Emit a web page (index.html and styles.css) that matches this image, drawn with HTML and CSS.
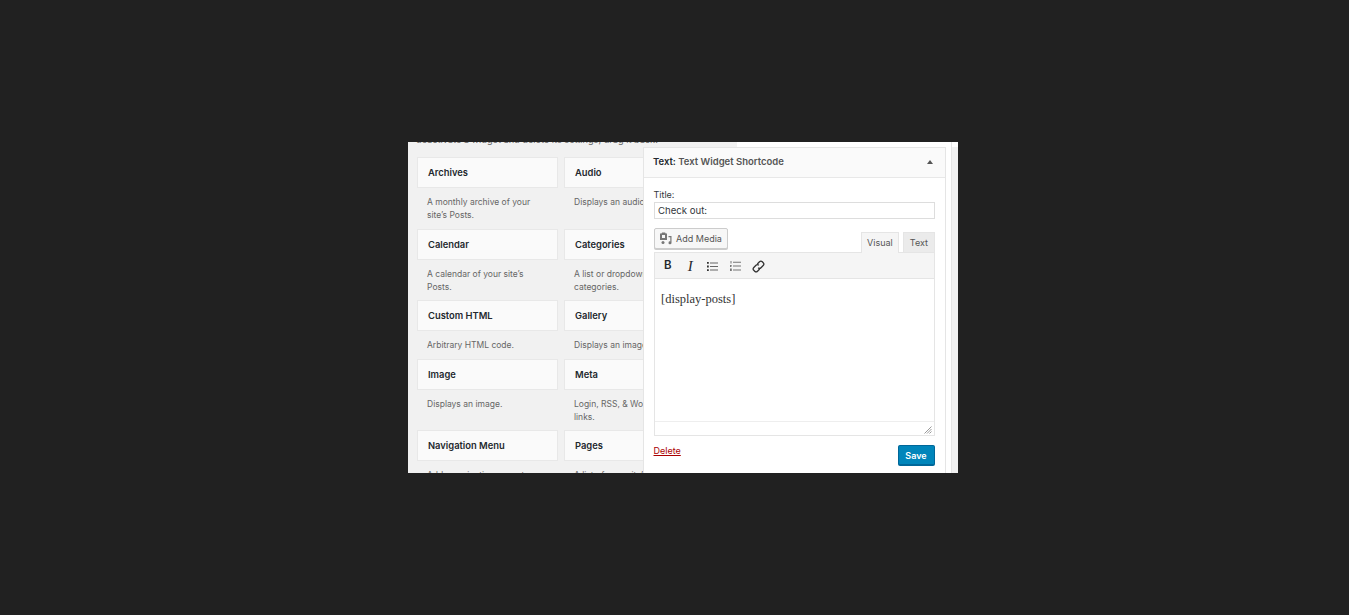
FILE: index.html
```html
<!DOCTYPE html>
<html lang="en">
<head>
<meta charset="utf-8">
<title>Text Widget</title>
<link rel="stylesheet" href="styles.css">
</head>
<body>
<main class="frame">
  <section class="library">
    <p class="intro">deactivate a widget and delete its settings, drag it back.</p>
    <div class="grid">
      <div class="cell"><h3 class="card">Archives</h3><p class="desc">A monthly archive of your site’s Posts.</p></div>
      <div class="cell"><h3 class="card">Audio</h3><p class="desc">Displays an audio player.</p></div>
      <div class="cell"><h3 class="card">Calendar</h3><p class="desc">A calendar of your site’s Posts.</p></div>
      <div class="cell"><h3 class="card">Categories</h3><p class="desc">A list or dropdown of categories.</p></div>
      <div class="cell short"><h3 class="card">Custom HTML</h3><p class="desc">Arbitrary HTML code.</p></div>
      <div class="cell short"><h3 class="card">Gallery</h3><p class="desc">Displays an image gallery.</p></div>
      <div class="cell"><h3 class="card">Image</h3><p class="desc">Displays an image.</p></div>
      <div class="cell"><h3 class="card">Meta</h3><p class="desc">Login, RSS, &amp; WordPress.org links.</p></div>
      <div class="cell"><h3 class="card">Navigation Menu</h3><p class="desc">Add a navigation menu to your sidebar.</p></div>
      <div class="cell"><h3 class="card">Pages</h3><p class="desc">A list of your site’s Pages.</p></div>
    </div>
  </section>
  <section class="side">
    <div class="widget">
      <header class="widget-head">
        <span class="widget-title"><b>Text:</b> Text Widget Shortcode</span>
        <span class="arrow"></span>
      </header>
      <div class="widget-body">
        <label class="label" for="title">Title:</label>
        <input class="title-input" id="title" type="text" value="Check out:">
        <div class="tabs-row">
          <button class="media-btn" type="button">
            <svg class="media-icon" width="13" height="13" viewBox="0 0 13 13" aria-hidden="true"><path d="M1 1.500h1.500l.6-1h3l.6 1H8v6.500H1zM3 3v3h3V3z" fill="#777" fill-rule="evenodd"/><path d="M9.500 4h3v6.800a1.500 1.500 0 1 1-1.200-1.400V5.200H9.500z" fill="#777"/><circle cx="4" cy="10.500" r="1.500" fill="#777"/></svg>
            Add Media
          </button>
          <div class="tabs">
            <span class="tab active">Visual</span>
            <span class="tab">Text</span>
          </div>
        </div>
        <div class="editor">
          <div class="toolbar">
            <span class="tool tool-b">B</span>
            <span class="tool tool-i">I</span>
            <span class="tool"><svg width="11" height="9" viewBox="0 0 11 9" aria-hidden="true"><path d="M0 0h1.800v1.800H0zM0 3.600h1.800v1.800H0zM0 7.200h1.800V9H0z" fill="#333"/><path d="M3 .4h8v1H3zM3 4h8v1H3zM3 7.600h8v1H3z" fill="#666"/></svg></span>
            <span class="tool"><svg width="11" height="10" viewBox="0 0 11 10" aria-hidden="true"><path d="M.5 0h1v2.600h-1zM0 3.900h1.800v.6L.8 5.500h1v.6H0zM0 7.400h1.800V10H0z" fill="#777"/><path d="M3 .8h8v1H3zM3 4.600h8v1H3zM3 8.400h8v1H3z" fill="#777"/></svg></span>
            <span class="tool tool-link"><svg width="13" height="13" viewBox="0 0 13 13" aria-hidden="true"><g fill="none" stroke="#333" stroke-width="1.300"><path d="M5.300 4 7.500 1.800a2 2 0 0 1 2.800 0l.9.900a2 2 0 0 1 0 2.800L9 7.700a2 2 0 0 1-2.800 0"/><path d="M7.700 9 5.500 11.200a2 2 0 0 1-2.800 0l-.9-.9a2 2 0 0 1 0-2.800L4 5.300a2 2 0 0 1 2.800 0"/></g></svg></span>
          </div>
          <div class="content">[display-posts]</div>
          <div class="status"><svg class="grip" width="8" height="8" viewBox="0 0 8 8" aria-hidden="true"><path d="M7.500 .5 .5 7.500M7.500 3 3 7.500M7.500 5.500 5.500 7.500" stroke="#999" fill="none"/></svg></div>
        </div>
        <div class="actions">
          <a class="delete" href="#">Delete</a>
          <button class="save" type="button">Save</button>
        </div>
      </div>
    </div>
  </section>
</main>
</body>
</html>
```
FILE: styles.css
```css
* { box-sizing: border-box; }
html, body { margin: 0; height: 100%; }
body {
  background: #212121;
  padding: 142px 391px 142px 408px;
  font-family: Inter, "Liberation Sans", sans-serif;
  overflow: hidden;
}
.frame {
  position: relative;
  width: 550px;
  height: 331px;
  background: #f1f1f1;
  overflow: hidden;
}
.library { width: 329px; height: 100%; padding-left: 9px; }
.intro {
  margin: -8px 0 0 -1px;
  height: 23px;
  font-size: 9.200px;
  line-height: 11px;
  color: #666;
  white-space: nowrap;
}
.grid { display: grid; grid-template-columns: 141px 141px; column-gap: 6px; }
.cell { height: 71.500px; overflow: hidden; }
.cell.short { height: 58.500px; }
.card {
  margin: 0;
  height: 31px;
  padding: 0 10px;
  background: #fafafa;
  border: 1px solid #e8e8e8;
  font-size: 9.400px;
  font-weight: 600;
  line-height: 29px;
  color: #23282d;
  white-space: nowrap;
}
.desc {
  margin: 8px 0 0;
  padding: 0 10px;
  font-size: 8.500px;
  line-height: 13px;
  color: #666;
}
.side {
  position: absolute;
  top: 5px;
  left: 235px;
  right: 0;
  bottom: 0;
  background: #fff;
  padding: 0 5px 0 0;
  border-right: 7px solid #f1f1f1;
}
.side::before {
  content: "";
  position: absolute;
  top: -5px;
  left: 94px;
  right: -7px;
  height: 5px;
  background: #fff;
}
.side::after {
  content: "";
  position: absolute;
  top: -5px;
  right: -1px;
  bottom: 0;
  width: 1px;
  background: #e5e5e5;
}
.widget { height: 340px; border: 1px solid #e5e5e5; background: #fff; }
.widget-head {
  display: flex;
  align-items: center;
  justify-content: space-between;
  height: 30px;
  padding: 0 12px 2px 9px;
  background: #fafafa;
  border-bottom: 1px solid #e8e8e8;
  font-size: 9.500px;
  font-weight: 600;
  color: #555;
}
.widget-title b { color: #23282d; font-weight: 600; }
.arrow {
  width: 0;
  height: 0;
  border: 3px solid transparent;
  border-top: 0;
  border-bottom: 4px solid #555;
}
.widget-body { padding: 12px 10.500px 0 10px; }
.label { display: block; margin: -1px 0 1px -0.500px; font-size: 9px; line-height: 12px; color: #32373c; }
.title-input {
  display: block;
  width: 100%;
  height: 17px;
  padding: 0 3px;
  border: 1px solid #ddd;
  font: 9.600px/15px Inter, "Liberation Sans", sans-serif;
  color: #32373c;
  outline: 0;
}
.tabs-row { display: flex; justify-content: space-between; align-items: flex-end; height: 33px; }
.media-btn {
  display: flex;
  align-items: center;
  gap: 4px;
  width: 74px;
  height: 21px;
  margin-bottom: 3px;
  padding: 0 4px;
  background: #f7f7f7;
  border: 1px solid #ccc;
  border-radius: 2px;
  box-shadow: 0 1px 0 #ccc;
  font: 9px Inter, "Liberation Sans", sans-serif;
  color: #555;
  white-space: nowrap;
}
.tabs { display: flex; gap: 4px; }
.tab {
  display: block;
  height: 20px;
  padding: 0 5.500px;
  background: #ebebeb;
  border: 1px solid #e5e5e5;
  border-bottom: 0;
  font-size: 9px;
  line-height: 20px;
  color: #555;
}
.tab.active { background: #f5f5f5; margin-bottom: -1px; height: 21px; position: relative; }
.editor { border: 1px solid #e5e5e5; }
.toolbar {
  display: flex;
  align-items: center;
  height: 26px;
  padding: 1px 0 0 1.500px;
  background: #f5f5f5;
  border-bottom: 1px solid #e5e5e5;
}
.tool { display: flex; justify-content: center; align-items: center; width: 22.500px; font-size: 11.500px; line-height: 1; color: #23282d; }
.tool-b { font-weight: 600; }
.tool-i { font-family: "Liberation Serif", serif; font-style: italic; font-size: 15px; }
.tool-link { padding-left: 1px; }
.content {
  height: 143px;
  padding: 12px 6px;
  background: #fff;
  border-bottom: 1px solid #eee;
  font-family: "Liberation Serif", serif;
  font-size: 12.500px;
  line-height: 16px;
  color: #333;
}
.status { display: flex; justify-content: flex-end; align-items: flex-end; height: 13px; padding: 0 2px 1px 0; background: #fff; }
.actions { display: flex; justify-content: space-between; align-items: flex-start; padding-top: 9px; }
.delete { margin: -1px 0 0 -0.500px; font-size: 9px; line-height: 13px; color: #a00; }
.save {
  width: 37px;
  height: 21px;
  padding: 0;
  background: #0085ba;
  border: 1px solid #006799;
  border-bottom-width: 2px;
  border-radius: 2px;
  font: 600 9px Inter, "Liberation Sans", sans-serif;
  color: #fff;
}
```
